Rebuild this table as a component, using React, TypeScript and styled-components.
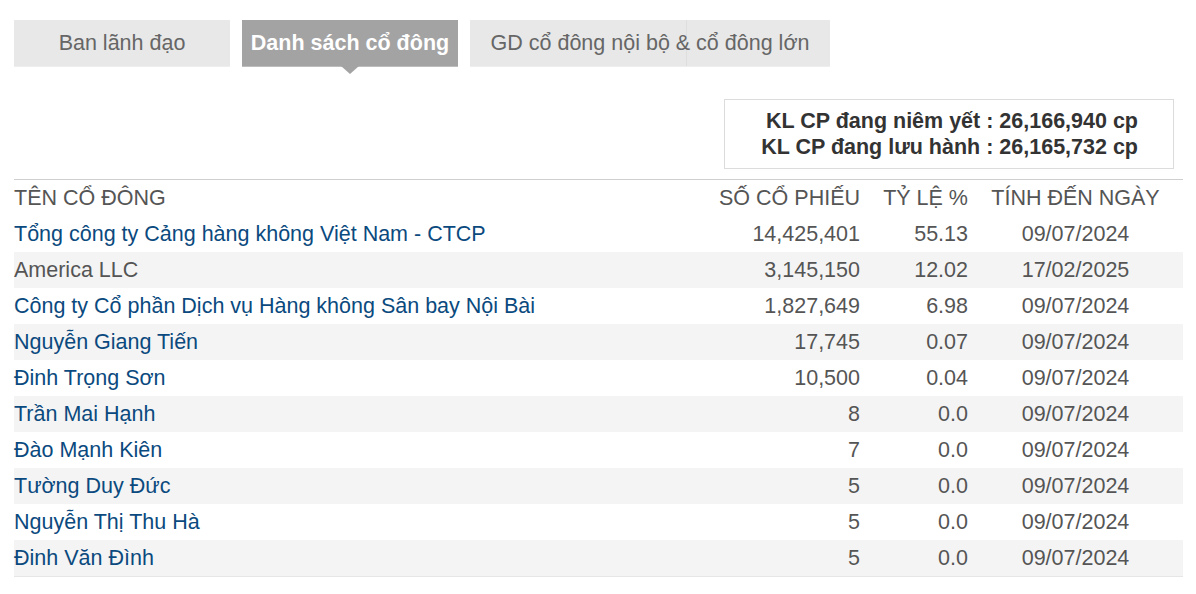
import { FC } from 'react';
import styled, { createGlobalStyle } from 'styled-components';

const GlobalStyle = createGlobalStyle`
  body {
    margin: 0;
    background: #fff;
    font-family: 'Liberation Sans', Arial, sans-serif;
  }
`;

const Page = styled.div`
  padding: 20px 13px 0 14px;
  width: 1169px;
`;

const Tabs = styled.div`
  display: flex;
  gap: 12px;
`;

const Tab = styled.div<{ $active?: boolean; $width: number }>`
  position: relative;
  width: ${({ $width }) => $width}px;
  height: 46px;
  display: flex;
  align-items: center;
  justify-content: center;
  font-size: 21.5px;
  font-weight: ${({ $active }) => ($active ? 700 : 400)};
  color: ${({ $active }) => ($active ? '#fff' : '#666')};
  background: ${({ $active }) => ($active ? '#a3a3a3' : '#e8e8e8')};
  box-shadow: 0 1px 0 ${({ $active }) => ($active ? '#bdbdbd' : '#eeeeee')};
  white-space: nowrap;
  &.split {
    background: linear-gradient(to right, #e8e8e8 216px, #dedede 216px, #dedede 217px, #e8e8e8 217px);
  }
  ${({ $active }) =>
    $active &&
    `
    &::after {
      content: '';
      position: absolute;
      left: 50%;
      bottom: -8px;
      margin-left: -9px;
      border-left: 9px solid transparent;
      border-right: 9px solid transparent;
      border-top: 8px solid #a3a3a3;
    }
  `}
`;

const SummaryWrap = styled.div`
  display: flex;
  justify-content: flex-end;
  padding: 33px 9px 10px 0;
`;

const Summary = styled.div`
  width: 413px;
  border: 1px solid #dcdcdc;
  padding: 8px 35px 8px 0;
  text-align: right;
  font-size: 21.5px;
  font-weight: 700;
  line-height: 26px;
  color: #333;
  white-space: nowrap;
`;

const Table = styled.div`
  border-top: 1px solid #cfcfcf;
`;

const Row = styled.div<{ $striped?: boolean }>`
  display: grid;
  grid-template-columns: 1fr 160px 108px 215px;
  height: 36px;
  align-items: center;
  font-size: 21.5px;
  color: #555;
  background: ${({ $striped }) => ($striped ? '#f4f4f4' : 'transparent')};
  &:last-child {
    border-bottom: 1px solid #e6e6e6;
  }
`;

const Name = styled.div<{ $link?: boolean }>`
  color: ${({ $link }) => ($link ? '#0b4a7e' : '#555')};
  white-space: nowrap;
`;

const Num = styled.div`
  text-align: right;
  white-space: nowrap;
`;

const DateCell = styled.div`
  text-align: center;
  white-space: nowrap;
`;

type Holder = { name: string; shares: string; ratio: string; date: string; link: boolean };

const holders: Holder[] = [
  { name: 'Tổng công ty Cảng hàng không Việt Nam - CTCP', shares: '14,425,401', ratio: '55.13', date: '09/07/2024', link: true },
  { name: 'America LLC', shares: '3,145,150', ratio: '12.02', date: '17/02/2025', link: false },
  { name: 'Công ty Cổ phần Dịch vụ Hàng không Sân bay Nội Bài', shares: '1,827,649', ratio: '6.98', date: '09/07/2024', link: true },
  { name: 'Nguyễn Giang Tiến', shares: '17,745', ratio: '0.07', date: '09/07/2024', link: true },
  { name: 'Đinh Trọng Sơn', shares: '10,500', ratio: '0.04', date: '09/07/2024', link: true },
  { name: 'Trần Mai Hạnh', shares: '8', ratio: '0.0', date: '09/07/2024', link: true },
  { name: 'Đào Mạnh Kiên', shares: '7', ratio: '0.0', date: '09/07/2024', link: true },
  { name: 'Tường Duy Đức', shares: '5', ratio: '0.0', date: '09/07/2024', link: true },
  { name: 'Nguyễn Thị Thu Hà', shares: '5', ratio: '0.0', date: '09/07/2024', link: true },
  { name: 'Đinh Văn Đình', shares: '5', ratio: '0.0', date: '09/07/2024', link: true }
];

const App: FC = () => (
  <>
    <GlobalStyle />
    <Page>
      <Tabs>
        <Tab $width={216}>Ban lãnh đạo</Tab>
        <Tab $width={216} $active>
          Danh sách cổ đông
        </Tab>
        <Tab $width={360} className={'split'}>
          GD cổ đông nội bộ &amp; cổ đông lớn
        </Tab>
      </Tabs>
      <SummaryWrap>
        <Summary>
          KL CP đang niêm yết : 26,166,940 cp
          <br />
          KL CP đang lưu hành : 26,165,732 cp
        </Summary>
      </SummaryWrap>
      <Table>
        <Row>
          <Name>TÊN CỔ ĐÔNG</Name>
          <Num>SỐ CỔ PHIẾU</Num>
          <Num>TỶ LỆ %</Num>
          <DateCell>TÍNH ĐẾN NGÀY</DateCell>
        </Row>
        {holders.map(({ name, shares, ratio, date, link }, i) => (
          <Row key={name} $striped={i % 2 === 1}>
            <Name $link={link}>{name}</Name>
            <Num>{shares}</Num>
            <Num>{ratio}</Num>
            <DateCell>{date}</DateCell>
          </Row>
        ))}
      </Table>
    </Page>
  </>
);

export default App;
